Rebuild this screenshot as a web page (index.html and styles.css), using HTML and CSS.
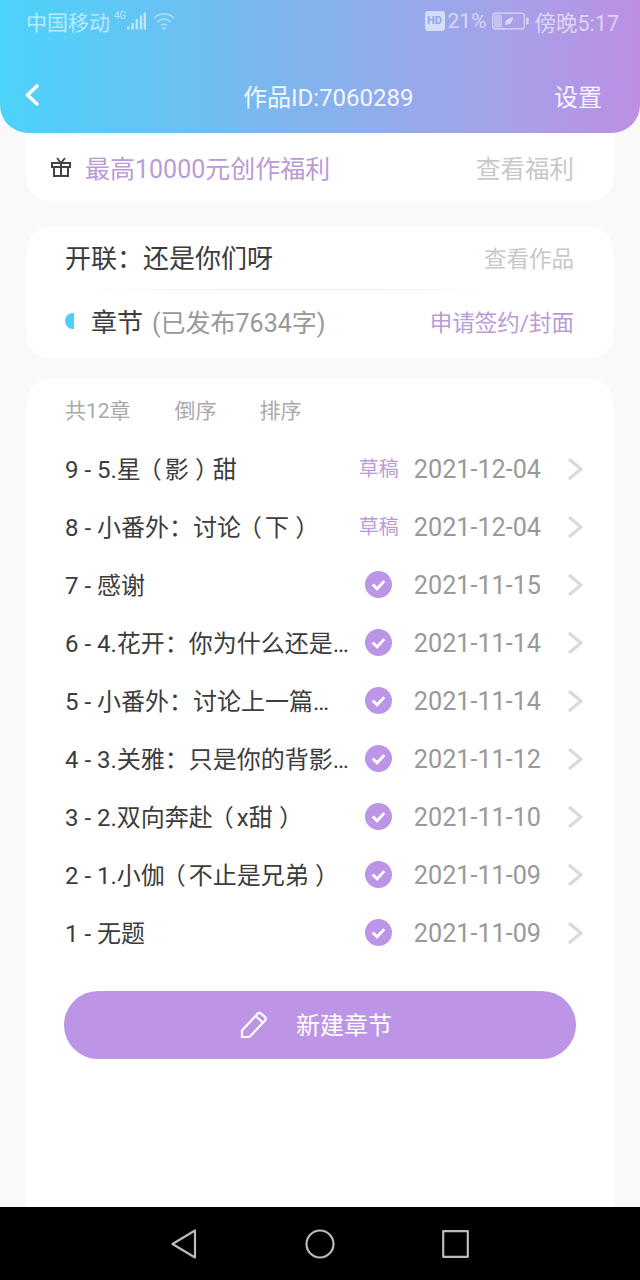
FILE: index.html
```html
<!DOCTYPE html>
<html lang="zh-CN">
<head>
  <meta charset="UTF-8">
  <meta name="viewport" content="width=device-width, initial-scale=1.0">
  <title>作品设置</title>
  <link rel="stylesheet" href="styles.css">
</head>
<body>
  <header class="top">
    <div class="status">
      <span class="carrier">中国移动</span>
      <span class="net">4G</span>
      <svg class="signal" width="19" height="20" viewBox="0 0 20 20"><g fill="currentColor"><rect x="0" y="16" width="2.5" height="3"/><rect x="4.5" y="12" width="2.5" height="7"/><rect x="9" y="8" width="2.5" height="11"/><rect x="13.5" y="4" width="2.5" height="15"/><rect x="17.5" y="1" width="2.5" height="18"/></g></svg>
      <svg class="wifi" width="22" height="20" viewBox="0 0 22 20" fill="none" stroke="currentColor" stroke-width="1.8"><path d="M1 7a14 14 0 0 1 20 0"/><path d="M4.5 11a9 9 0 0 1 13 0"/><path d="M8 14.5a4.5 4.5 0 0 1 6 0"/><circle cx="11" cy="17.5" r="1.6" fill="currentColor" stroke="none"/></svg>
      <span class="hd">HD</span>
      <span class="pct">21%</span>
      <svg class="battery" width="37" height="18" viewBox="0 0 37 18"><rect x="0.7" y="1.2" width="31.6" height="15.6" rx="2.5" fill="none" stroke="currentColor" stroke-width="1.2"/><rect x="2" y="2.5" width="8" height="13" rx="1.2" fill="currentColor" opacity="0.6"/><rect x="34.2" y="5.5" width="2.4" height="7" rx="1" fill="currentColor"/><path d="M13 13c0-5 4-7 8-8 0 5-3 8-8 8z" fill="currentColor"/></svg>
      <span class="clock">傍晚5:17</span>
    </div>
    <div class="bar">
      <svg class="back" width="16" height="24" viewBox="0 0 16 24" fill="none" stroke="#fff" stroke-width="3.6" stroke-linecap="round" stroke-linejoin="round"><path d="M13 3 3.500 12 13 21"/></svg>
      <span class="bar-title">作品ID:7060289</span>
      <span class="bar-action">设置</span>
    </div>
  </header>

  <main class="page">
    <section class="card promo">
      <svg class="gift" width="22" height="22" viewBox="0 0 22 22" fill="none" stroke="#444" stroke-width="2"><rect x="2" y="7" width="18" height="4"/><path d="M4 11v9h14v-9M11 7v13"/><path d="M7 2l4 5 4-5"/></svg>
      <span class="promo-text">最高10000元创作福利</span>
      <span class="promo-link">查看福利</span>
    </section>

    <section class="card work">
      <div class="work-row">
        <span class="work-name">开联<span class="punct">：</span>还是你们呀</span>
        <span class="work-link">查看作品</span>
      </div>
      <div class="divider"></div>
      <div class="work-row chapters">
        <span class="half-dot"></span>
        <span class="chapters-label">章节</span>
        <span class="chapters-count">(已发布7634字)</span>
        <span class="apply">申请签约/封面</span>
      </div>
    </section>

    <section class="card list">
      <div class="tabs">
        <span class="tab-count">共12章</span>
        <span>倒序</span>
        <span>排序</span>
      </div>

      <div class="row">
        <span class="row-title">9 - 5.星<span class="open">（</span>影<span class="close">）</span>甜</span>
        <span class="state draft">草稿</span>
        <span class="date">2021-12-04</span>
        <svg class="chevron" width="16" height="24" viewBox="0 0 16 24"><path d="M2 2l12 10L2 22"/></svg>
      </div>
      <div class="row">
        <span class="row-title">8 - 小番外<span class="punct">：</span>讨论<span class="open">（</span>下<span class="close">）</span></span>
        <span class="state draft">草稿</span>
        <span class="date">2021-12-04</span>
        <svg class="chevron" width="16" height="24" viewBox="0 0 16 24"><path d="M2 2l12 10L2 22"/></svg>
      </div>
      <div class="row">
        <span class="row-title">7 - 感谢</span>
        <span class="state"><svg width="27" height="27" viewBox="0 0 28 28"><circle cx="14" cy="14" r="14" fill="#bd95e6"/><path d="M8 14l4.500 4.500L20 10.500" fill="none" stroke="#fff" stroke-width="3"/></svg></span>
        <span class="date">2021-11-15</span>
        <svg class="chevron" width="16" height="24" viewBox="0 0 16 24"><path d="M2 2l12 10L2 22"/></svg>
      </div>
      <div class="row">
        <span class="row-title">6 - 4.花开<span class="punct">：</span>你为什么还是…</span>
        <span class="state"><svg width="27" height="27" viewBox="0 0 28 28"><circle cx="14" cy="14" r="14" fill="#bd95e6"/><path d="M8 14l4.500 4.500L20 10.500" fill="none" stroke="#fff" stroke-width="3"/></svg></span>
        <span class="date">2021-11-14</span>
        <svg class="chevron" width="16" height="24" viewBox="0 0 16 24"><path d="M2 2l12 10L2 22"/></svg>
      </div>
      <div class="row">
        <span class="row-title">5 - 小番外<span class="punct">：</span>讨论上一篇…</span>
        <span class="state"><svg width="27" height="27" viewBox="0 0 28 28"><circle cx="14" cy="14" r="14" fill="#bd95e6"/><path d="M8 14l4.500 4.500L20 10.500" fill="none" stroke="#fff" stroke-width="3"/></svg></span>
        <span class="date">2021-11-14</span>
        <svg class="chevron" width="16" height="24" viewBox="0 0 16 24"><path d="M2 2l12 10L2 22"/></svg>
      </div>
      <div class="row">
        <span class="row-title">4 - 3.关雅<span class="punct">：</span>只是你的背影…</span>
        <span class="state"><svg width="27" height="27" viewBox="0 0 28 28"><circle cx="14" cy="14" r="14" fill="#bd95e6"/><path d="M8 14l4.500 4.500L20 10.500" fill="none" stroke="#fff" stroke-width="3"/></svg></span>
        <span class="date">2021-11-12</span>
        <svg class="chevron" width="16" height="24" viewBox="0 0 16 24"><path d="M2 2l12 10L2 22"/></svg>
      </div>
      <div class="row">
        <span class="row-title">3 - 2.双向奔赴<span class="open">（</span>x甜<span class="close">）</span></span>
        <span class="state"><svg width="27" height="27" viewBox="0 0 28 28"><circle cx="14" cy="14" r="14" fill="#bd95e6"/><path d="M8 14l4.500 4.500L20 10.500" fill="none" stroke="#fff" stroke-width="3"/></svg></span>
        <span class="date">2021-11-10</span>
        <svg class="chevron" width="16" height="24" viewBox="0 0 16 24"><path d="M2 2l12 10L2 22"/></svg>
      </div>
      <div class="row">
        <span class="row-title">2 - 1.小伽<span class="open">（</span>不止是兄弟<span class="close">）</span></span>
        <span class="state"><svg width="27" height="27" viewBox="0 0 28 28"><circle cx="14" cy="14" r="14" fill="#bd95e6"/><path d="M8 14l4.500 4.500L20 10.500" fill="none" stroke="#fff" stroke-width="3"/></svg></span>
        <span class="date">2021-11-09</span>
        <svg class="chevron" width="16" height="24" viewBox="0 0 16 24"><path d="M2 2l12 10L2 22"/></svg>
      </div>
      <div class="row">
        <span class="row-title">1 - 无题</span>
        <span class="state"><svg width="27" height="27" viewBox="0 0 28 28"><circle cx="14" cy="14" r="14" fill="#bd95e6"/><path d="M8 14l4.500 4.500L20 10.500" fill="none" stroke="#fff" stroke-width="3"/></svg></span>
        <span class="date">2021-11-09</span>
        <svg class="chevron" width="16" height="24" viewBox="0 0 16 24"><path d="M2 2l12 10L2 22"/></svg>
      </div>

      <button class="new-chapter">
        <svg width="28" height="28" viewBox="0 0 28 28" fill="none" stroke="#fff" stroke-width="2.200" stroke-linejoin="round"><path d="M2 26v-6.500L17.500 2.800a2.500 2.500 0 0 1 3.500-.2l3.800 3.300a2.500 2.500 0 0 1 .2 3.500L9.500 26z"/><path d="M15.500 5l7 6.200"/></svg>
        <span class="new-label">新建章节</span>
      </button>
    </section>
  </main>

  <nav class="softkeys">
    <svg width="26" height="30" viewBox="0 0 26 30" fill="none" stroke="#bbb" stroke-width="2.200" stroke-linejoin="round"><path d="M24 1.500v27L1.500 15z"/></svg>
    <svg width="30" height="30" viewBox="0 0 30 30" fill="none" stroke="#bbb" stroke-width="2.200"><circle cx="15" cy="15" r="13.500"/></svg>
    <svg width="27" height="28" viewBox="0 0 27 28" fill="none" stroke="#bbb" stroke-width="2.200" stroke-linejoin="round"><rect x="1.200" y="1.200" width="24.600" height="25.600"/></svg>
  </nav>
</body>
</html>
```

FILE: styles.css
```css
* {
  box-sizing: border-box;
}

html, body {
  height: 100%;
}

body {
  margin: 0;
  height: 1280px;
  display: flex;
  flex-direction: column;
  background: #f9f9f9;
  color: #3c3c3c;
  font-family: Roboto, "Noto Sans CJK SC", sans-serif;
  overflow: hidden;
}

/* centred full-width punctuation, as the phone's font draws it */
.punct {
  font-family: "Noto Sans CJK TC", sans-serif;
}

.open {
  font-feature-settings: "halt";
  margin: 0 0.13em 0 0.37em;
}

.close {
  font-feature-settings: "halt";
  margin: 0 0.24em 0 0.26em;
}

/* header */
.top {
  height: 133px;
  flex: none;
  border-radius: 0 0 28px 28px;
  background: linear-gradient(90deg, #4bd3fa 0%, #7fb5ee 45%, #a5a2e9 78%, #bc8fe4 100%);
}

.status {
  height: 44px;
  display: flex;
  align-items: center;
  padding: 0 21px 2px 26px;
  color: rgba(255,255,255,0.6);
  font-size: 21px;
}

.net {
  font-size: 10px;
  margin: -12px 0 0 4px;
}

.signal {
  margin-left: 1px;
}

.wifi {
  margin-left: 7px;
  opacity: 0.7;
}

.hd {
  margin-left: auto;
  width: 20px;
  height: 20px;
  border-radius: 3px;
  background: rgba(255,255,255,0.6);
  color: #8fa8e8;
  font-size: 11px;
  font-weight: 700;
  line-height: 20px;
  text-align: center;
}

.pct {
  margin-left: 3px;
}

.battery {
  margin-left: 5px;
}

.clock {
  margin-left: 6px;
  font-size: 21.500px;
}

.bar {
  height: 89px;
  padding: 13px 38px 0 24px;
  display: flex;
  align-items: center;
  color: rgba(255,255,255,0.92);
}

.bar-title {
  margin-left: 203px;
  font-size: 24px;
}

.bar-action {
  margin-left: auto;
  font-size: 24px;
}

/* cards */
.page {
  flex: 1;
  display: flex;
  flex-direction: column;
  padding: 0 26px;
  min-height: 0;
}

.card {
  background: #fff;
  border-radius: 24px;
}

.promo {
  height: 68px;
  padding: 0 40px 0 24px;
  display: flex;
  align-items: center;
  border-radius: 0 0 24px 24px;
}

.promo-text {
  margin-left: 13px;
  color: #bb9ad8;
  font-size: 25px;
}

.promo-link {
  margin-left: auto;
  color: #c8c8c8;
  font-size: 24.500px;
}

.work {
  margin-top: 26px;
  height: 131px;
  padding: 0 40px 0 39px;
}

.work-row {
  height: 62px;
  padding-bottom: 3px;
  display: flex;
  align-items: center;
}

.work-name {
  font-size: 26px;
}

.work-link {
  margin-left: auto;
  color: #c8c8c8;
  font-size: 22.500px;
}

.divider {
  height: 1px;
  margin: 0 0 0 10px;
  background: linear-gradient(90deg, #fff, #ececec 30%, #ececec 60%, #fff 85%);
}

.chapters {
  height: 64px;
}

.half-dot {
  width: 9px;
  height: 16px;
  border-radius: 8px 0 0 8px;
  background: #4ccffa;
}

.chapters-label {
  margin-left: 17px;
  font-size: 26px;
}

.chapters-count {
  margin-left: 9px;
  color: #999;
  font-size: 25px;
}

.apply {
  margin-left: auto;
  color: #bb9ad8;
  font-size: 22.500px;
}

/* chapter list */
.list {
  margin-top: 21px;
  flex: 1;
  padding: 0 31px 0 39px;
  border-radius: 24px 24px 0 0;
}

.tabs {
  height: 61px;
  padding-bottom: 2px;
  display: flex;
  align-items: center;
  gap: 43px;
  color: #aaa;
  font-size: 21px;
}

.tab-count {
  margin-right: 1px;
}

.row {
  height: 58px;
  display: flex;
  align-items: center;
}

.row-title {
  flex: 1;
  min-width: 0;
  padding-bottom: 3px;
  white-space: nowrap;
  font-size: 24px;
}

.state {
  width: 40px;
  display: flex;
  justify-content: center;
  margin-left: 7px;
  padding-bottom: 1px;
}

.draft {
  padding-bottom: 3px;
  color: #bb9ad8;
  font-size: 20px;
}

.date {
  margin-left: 15px;
  color: #999;
  font-size: 25.200px;
}

.chevron {
  margin-left: 26px;
  fill: none;
  stroke: #dadada;
  stroke-width: 3.4;
}

.new-chapter {
  width: 512px;
  height: 68px;
  margin: 29px 0 0 -1px;
  padding: 0 8px 0 0;
  border: none;
  border-radius: 34px;
  background: #bd95e6;
  color: #fff;
  display: flex;
  align-items: center;
  justify-content: center;
  gap: 28px;
  font-family: inherit;
  font-size: 24px;
}

.new-label {
  padding-bottom: 3px;
}

/* android soft keys */
.softkeys {
  height: 73px;
  flex: none;
  background: #000;
  padding: 0 171px;
  display: flex;
  align-items: center;
  justify-content: space-between;
}
```
